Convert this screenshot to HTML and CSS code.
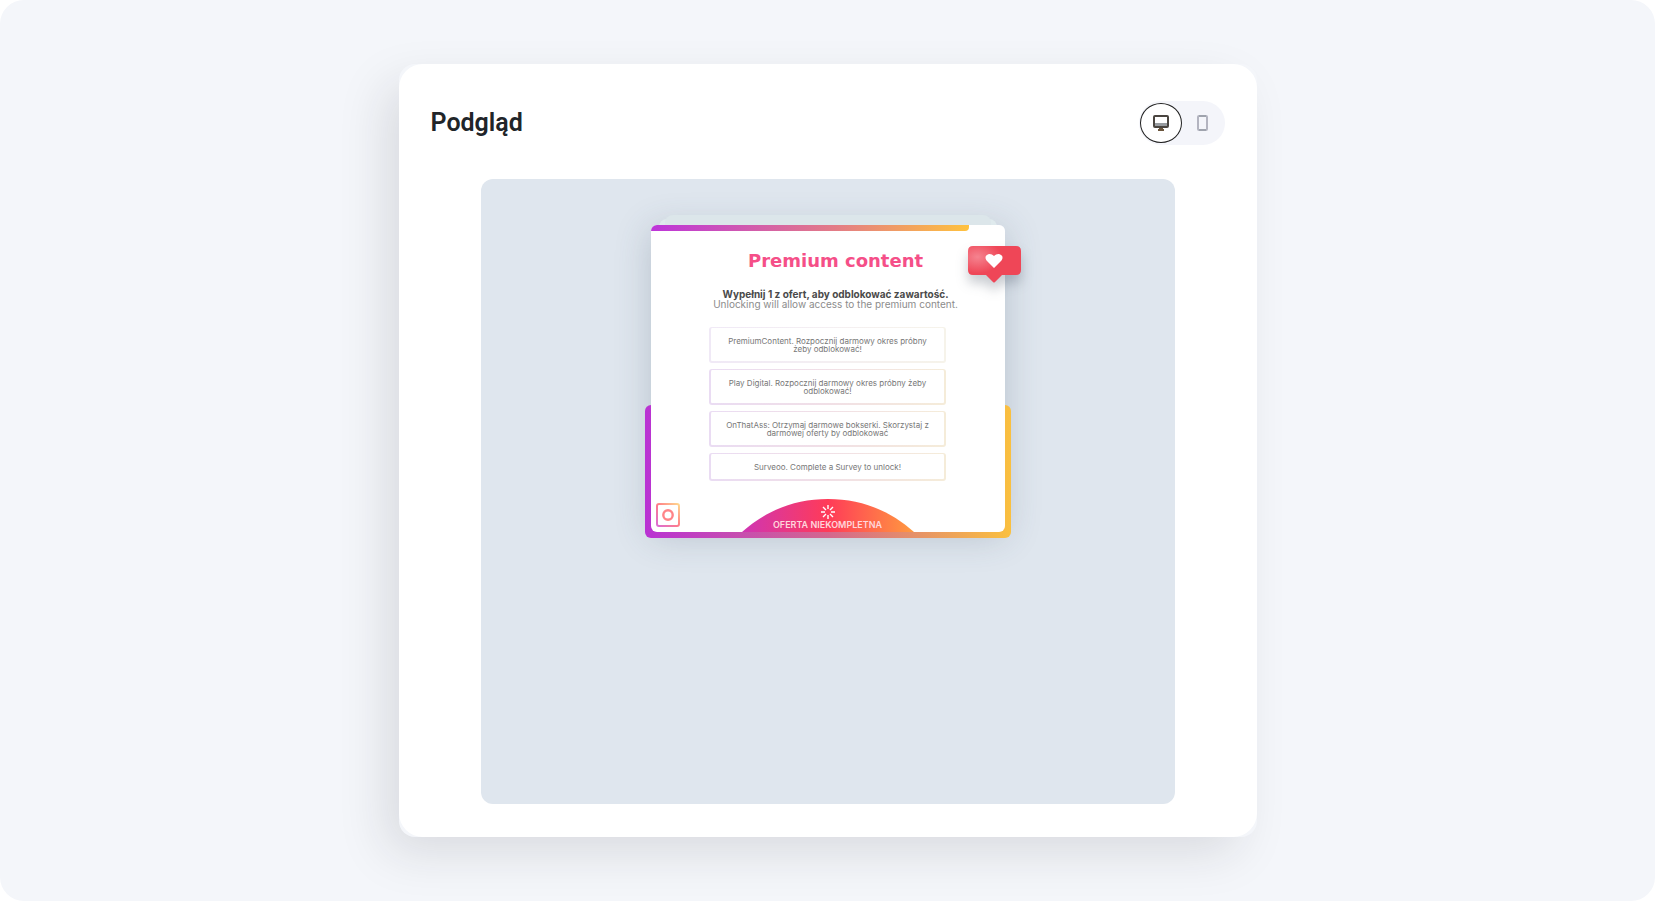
FILE: index.html
```html
<!DOCTYPE html>
<html lang="pl">
  <head>
    <meta charset="UTF-8" />
    <meta name="viewport" content="width=device-width, initial-scale=1" />
    <title>Podgląd</title>
    <link rel="stylesheet" href="styles.css">
  </head>
  <body>
    <main class="page">
      <div class="panel-wrap">
        <section class="panel">
          <header class="panel-header">
            <h1>Podgląd</h1>
            <div class="device-switch">
              <button class="device-btn active" type="button" aria-label="Desktop">
                <svg width="18" height="18" viewBox="0 0 18 18" fill="none">
                  <rect x="2" y="2" width="14" height="11" rx="1" stroke="#4a4540" stroke-width="2" />
                  <path d="M3 9h12v3H3z" fill="#989ca0" />
                  <path d="M7 14h4v1h1v2H6v-2h1z" fill="#6b553c" />
                </svg>
              </button>
              <button class="device-btn" type="button" aria-label="Mobile">
                <svg width="18" height="18" viewBox="0 0 18 18" fill="none">
                  <rect x="4" y="2" width="9" height="14" rx="1" stroke="#b3b4c0" stroke-width="2" />
                  <path d="M5 2h7M5 16h7" stroke="#9fa3ad" stroke-width="2" />
                </svg>
              </button>
            </div>
          </header>

          <div class="preview">
            <div class="locker">
              <div class="sheet sheet-mid"></div>
              <div class="sheet sheet-back"></div>
              <div class="frame"></div>
              <div class="locker-card">
                <div class="progress"></div>
                <h2>Premium content</h2>
                <p class="lead">
                  <strong>Wypełnij 1 z ofert, aby odblokować zawartość.</strong><br>
                  Unlocking will allow access to the premium content.
                </p>
                <div class="offers">
                  <button class="offer" type="button">PremiumContent. Rozpocznij darmowy okres próbny<br>żeby odblokować!</button>
                  <button class="offer strong" type="button">Play Digital. Rozpocznij darmowy okres próbny żeby<br>odblokować!</button>
                  <button class="offer strong" type="button">OnThatAss: Otrzymaj darmowe bokserki. Skorzystaj z<br>darmowej oferty by odblokować</button>
                  <button class="offer strong" type="button">Surveoo. Complete a Survey to unlock!</button>
                </div>
                <footer class="status">
                  <svg class="dome" viewBox="0 0 172 33" preserveAspectRatio="none">
                    <defs>
                      <linearGradient id="dome">
                        <stop offset="0" stop-color="#cf35b4" />
                        <stop offset=".5" stop-color="#ff3b58" />
                        <stop offset="1" stop-color="#ff9a3f" />
                      </linearGradient>
                    </defs>
                    <path d="M0 33C25 11 53 0 86 0s61 11 86 33z" fill="url(#dome)" />
                  </svg>
                  <svg class="spinner" width="14" height="14" viewBox="0 0 14 14" stroke="#fff" stroke-width="1.4">
                    <path d="M7 0v4M7 10v4M0 7h4M10 7h4M2 2l3 3M9 9l3 3M2 12l3-3M9 5l3-3" />
                  </svg>
                  <span>OFERTA NIEKOMPLETNA</span>
                </footer>
              </div>

              <svg class="insta" width="24" height="24" viewBox="0 0 24 24" fill="none">
                <defs>
                  <linearGradient id="insta" x1="0" y1="24" x2="24" y2="0" gradientUnits="userSpaceOnUse">
                    <stop offset="0" stop-color="#d76bdc" />
                    <stop offset=".5" stop-color="#ff7d88" />
                    <stop offset="1" stop-color="#ffe08f" />
                  </linearGradient>
                </defs>
                <rect x="1" y="1" width="22" height="22" rx="2" stroke="url(#insta)" stroke-width="2" />
                <circle cx="12" cy="12" r="4.7" stroke="#ff8488" stroke-width="2.4" />
              </svg>

              <svg class="like" width="53" height="37" viewBox="0 0 53 37">
                <defs>
                  <radialGradient id="like" cx=".18" cy=".3" r=".45">
                    <stop offset="0" stop-color="#f5838f" />
                    <stop offset="1" stop-color="#ef4657" />
                  </radialGradient>
                </defs>
                <path d="M5 0h43q5 0 5 5v19q0 5-5 5H34l-7 7q-1 1-2 0l-7-7H5q-5 0-5-5V5q0-5 5-5z" fill="url(#like)" />
                <path d="M26 22l-7-7c-2-2-2-5 0-6 2-2 5-1 7 1 2-2 5-3 7-1 2 1 2 4 0 6z" fill="#fff" />
              </svg>
            </div>
          </div>
        </section>
      </div>
    </main>
  </body>
</html>
```
FILE: styles.css
```css
* {
  box-sizing: border-box;
}
body {
  margin: 0;
  background: #fff;
  font-family: Roboto, "Liberation Sans", sans-serif;
  color: #212529;
}
.page {
  display: flex;
  justify-content: center;
  align-items: center;
  min-height: 100vh;
  padding: 64px 24px;
  background: #f4f6fa;
  border-radius: 24px;
}
.panel-wrap {
  width: 100%;
  max-width: 858px;
  background: #f4f6fa;
  border-radius: 16px;
  box-shadow: -16px 18px 50px -4px rgba(34, 28, 38, 0.13);
}
.panel {
  padding: 37px 32px 33px;
  background: #fff;
  border-radius: 24px;
}
.panel-header {
  display: flex;
  justify-content: space-between;
  align-items: center;
  margin-bottom: 34px;
}
h1 {
  margin: 0;
  font-size: 25px;
  font-weight: 600;
  line-height: 32px;
}

/* desktop / mobile switch */
.device-switch {
  display: flex;
  align-items: center;
  height: 44px;
  padding: 0 1px;
  background: #f4f5fa;
  border-radius: 22px;
}
.device-btn {
  display: flex;
  align-items: center;
  justify-content: center;
  width: 42px;
  height: 40px;
  padding: 0;
  border: 0;
  border-radius: 50%;
  background: none;
  cursor: pointer;
}
.device-btn.active {
  background: #fff;
  border: 1px solid #222;
}

.preview {
  display: flex;
  justify-content: center;
  align-items: flex-start;
  max-width: 694px;
  min-height: 625px;
  margin: 0 auto;
  padding: 46px 16px;
  background: #dfe6ee;
  border-radius: 12px;
}

/* content locker */
.locker {
  position: relative;
  width: 354px;
  font-family: Inter, "Open Sans", sans-serif;
}
.sheet {
  position: absolute;
  height: 24px;
  border-radius: 8px;
}
.sheet-back {
  top: -10px;
  left: 14px;
  right: 14px;
  background: #dce6ea;
}
.sheet-mid {
  top: -6px;
  left: 8px;
  right: 8px;
  background: #dfeaed;
}
.frame {
  position: absolute;
  left: -6px;
  right: -6px;
  bottom: -6px;
  height: 133px;
  border-radius: 6px;
  background: linear-gradient(90deg, #b932d3, #d3678e 50%, #fac03f);
}
.locker-card {
  position: relative;
  display: flex;
  flex-direction: column;
  align-items: center;
  background: #fff;
  border-radius: 6px;
  overflow: hidden;
}
.locker::before {
  content: "";
  position: absolute;
  inset: 0;
  border-radius: 6px;
  box-shadow: 0 4px 36px rgba(60, 80, 100, 0.24);
}
.progress {
  align-self: flex-start;
  width: 90%;
  height: 6px;
  border-radius: 0 0 4px 0;
  background: linear-gradient(90deg, #bd35da, #e37c86 58%, #ffc23e);
}
h2 {
  margin: 18px 0 0;
  padding-left: 16px;
  font-family: "DejaVu Sans", Inter, sans-serif;
  font-size: 18px;
  font-weight: 700;
  line-height: 24px;
  color: #f54f88;
}
.lead {
  margin: 16px 0 0;
  padding-left: 16px;
  font-size: 10px;
  line-height: 10px;
  text-align: center;
  white-space: nowrap;
  color: #8c8c8c;
}
.lead strong {
  font-weight: 700;
  color: #4a4a4a;
}
.offers {
  display: flex;
  flex-direction: column;
  gap: 6px;
  width: 237px;
  margin-top: 18px;
}
.offer {
  padding: 8px 0;
  border: 2px solid transparent;
  border-width: 1px 2px 2px;
  padding-top: 9px;
  border-radius: 3px;
  background:
    linear-gradient(#fff, #fff) padding-box,
    linear-gradient(90deg, #f0e9f6, #f4eff2 50%, #f6f3ea) border-box;
  font-family: inherit;
  font-size: 8px;
  line-height: 8px;
  white-space: nowrap;
  color: #777;
  cursor: pointer;
}
.offer.strong {
  background:
    linear-gradient(#fff, #fff) padding-box,
    linear-gradient(transparent 90%, rgba(255, 255, 255, 0)) border-box,
    linear-gradient(90deg, #eadcf3, #f1dfe6 50%, #f5ecd9) border-box;
}
.status {
  position: relative;
  display: flex;
  flex-direction: column;
  align-items: center;
  width: 172px;
  height: 33px;
  margin-top: 18px;
  padding-top: 6px;
  font-size: 9px;
  font-weight: 600;
  line-height: 12px;
  white-space: nowrap;
  color: #ffd6dc;
}
.status span,
.spinner {
  position: relative;
}
.dome {
  position: absolute;
  inset: 0;
  width: 100%;
  height: 100%;
}
.insta {
  position: absolute;
  left: 5px;
  bottom: 5px;
}
.like {
  position: absolute;
  top: 21px;
  right: -16px;
  filter: drop-shadow(0 8px 6px rgba(40, 50, 70, 0.25));
}
```
